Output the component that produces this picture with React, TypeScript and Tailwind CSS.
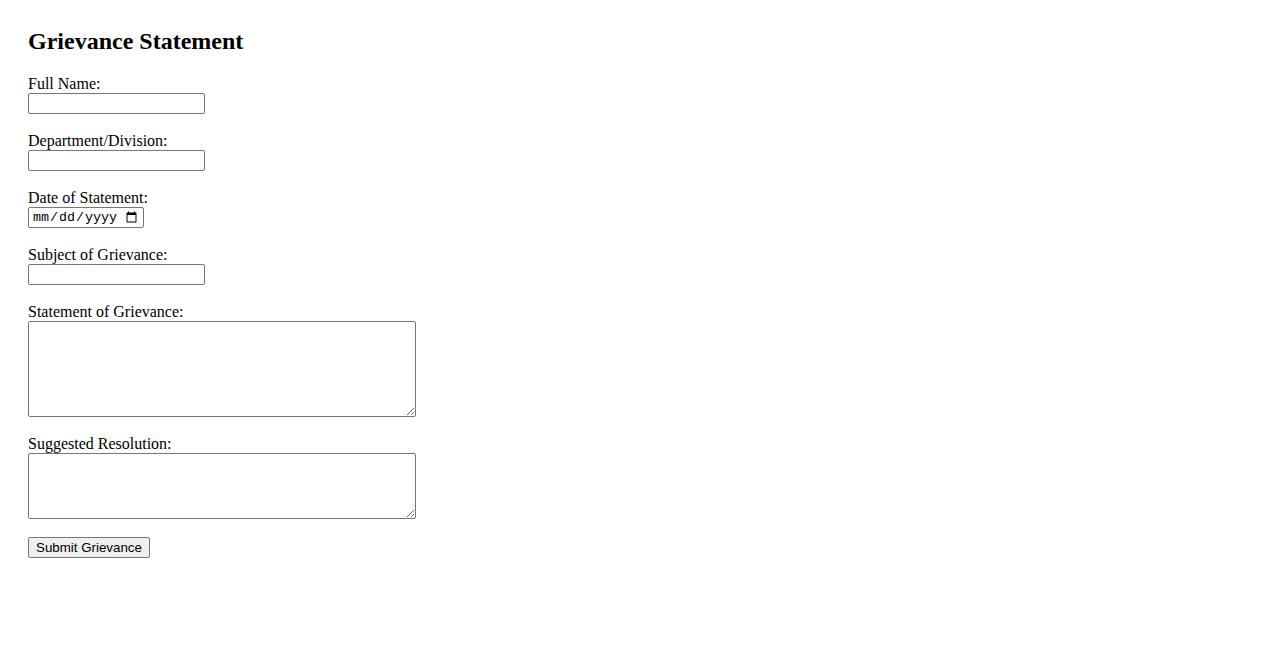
export default function App() {
  const textInput =
    "block w-[177px] h-[21px] px-[2px] py-[1px] bg-white border border-[#767676] rounded-[2px] text-[13.33px] font-['Liberation_Sans',Arial,sans-serif] outline-none";
  const textArea =
    "block w-[388px] px-[2px] py-[2px] bg-white border border-[#767676] rounded-[2px] text-[13.33px] font-['Liberation_Mono',monospace] outline-none resize";
  const label = "block h-[18px] leading-[18px]";

  return (
    <div className="min-h-screen bg-white pt-[27px] pl-[28px] text-black text-[16px] font-['Liberation_Serif','Times_New_Roman',serif]">
      <h2 className="text-[24px] font-bold leading-[28px] mb-[20px]">Grievance Statement</h2>
      <form onSubmit={(e) => e.preventDefault()}>
        <div className="mb-[18px]">
          <label htmlFor="fullName" className={label}>Full Name:</label>
          <input id="fullName" type="text" className={textInput} />
        </div>

        <div className="mb-[18px]">
          <label htmlFor="department" className={label}>Department/Division:</label>
          <input id="department" type="text" className={textInput} />
        </div>

        <div className="mb-[18px]">
          <label htmlFor="date" className={label}>Date of Statement:</label>
          <input
            id="date"
            type="date"
            className="block w-[116px] h-[21px] px-[3px] py-[1px] bg-white border border-[#767676] rounded-[2px] text-[13.33px] font-['Liberation_Mono',monospace] outline-none"
          />
        </div>

        <div className="mb-[18px]">
          <label htmlFor="subject" className={label}>Subject of Grievance:</label>
          <input id="subject" type="text" className={textInput} />
        </div>

        <div className="mb-[18px]">
          <label htmlFor="statement" className={label}>Statement of Grievance:</label>
          <textarea id="statement" className={textArea + " h-[96px]"} />
        </div>

        <div className="mb-[18px]">
          <label htmlFor="resolution" className={label}>Suggested Resolution:</label>
          <textarea id="resolution" className={textArea + " h-[66px]"} />
        </div>

        <button
          type="submit"
          className="block h-[21px] px-[7px] py-[1px] bg-[#efefef] border border-[#767676] rounded-[2px] text-[13.33px] leading-[normal] font-['Liberation_Sans',Arial,sans-serif] text-black"
        >
          Submit Grievance
        </button>
      </form>
    </div>
  );
}
